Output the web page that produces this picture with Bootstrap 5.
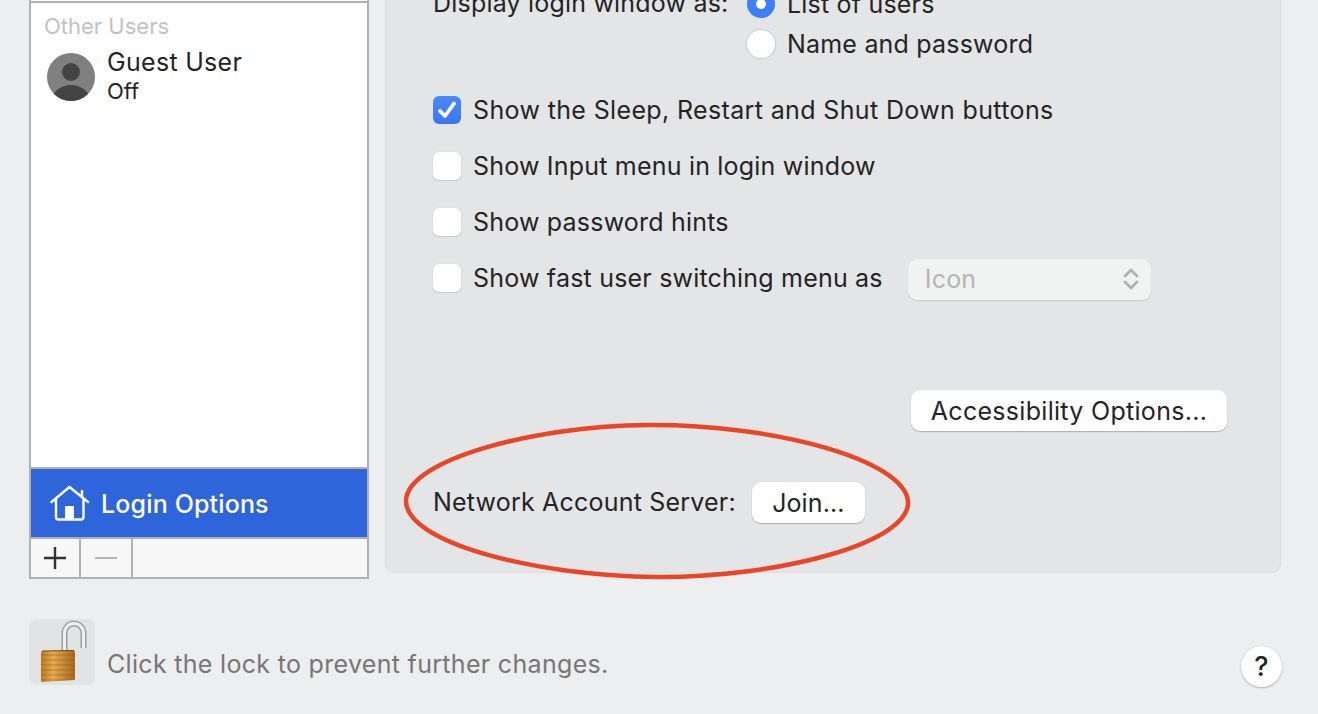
<!DOCTYPE html>
<html lang="en">
<head>
	<meta charset="UTF-8" />
	<title>Users &amp; Groups</title>
	<link href="https://cdn.jsdelivr.net/npm/bootstrap@5.3.3/dist/css/bootstrap.min.css" rel="stylesheet" />
	<style>
		html, body { height: 714px; overflow: hidden; }
		body { background: #edeef0; color: #242424; font-family: Inter, "Liberation Sans", sans-serif; font-size: 25px; line-height: 30px; letter-spacing: .2px; }
		.main-area { margin-top: -40px; padding: 0 37px 0 29px; height: 619px; gap: 16px; }
		.user-side { width: 340px; height: 619px; border: 2px solid #b1b1b1; border-top: 0; background: #fff; }
		.side-top { height: 43px; border-bottom: 2px solid #b1b1b1; }
		.side-body { padding: 9px 0 0 13px; }
		.side-head { color: #c2c2c2; font-size: 22px; line-height: 28px; letter-spacing: 0; }
		.guest-row { margin: 4px 0 0 3px; gap: 12px; }
		.guest-pic { margin-top: 9px; }
		.guest-name { line-height: 32px; margin-top: 2px; letter-spacing: .3px; }
		.guest-off { font-size: 22px; line-height: 27px; letter-spacing: 0; }
		.login-row { height: 72px; background: #2f65da; color: #fff; border-top: 2px solid #b1b1b1; border-bottom: 2px solid #b1b1b1; padding-left: 19px; gap: 11px; font-weight: 500; letter-spacing: .15px; }
		.login-label { margin-top: 2px; }
		.side-tools { height: 38px; background: #f7f7f7; }
		.tool-btn { height: 38px; border-right: 2px solid #b1b1b1; }
		.tool-plus { width: 50px; }
		.tool-minus { width: 52px; }
		.pref-panel { width: 896px; height: 613px; background: #e4e5e7; border: 1px solid #dcdddf; border-radius: 9px; padding: 24px 47px 0; }
		.login-as { gap: 11px; height: 78px; margin-bottom: 19px; }
		.as-label { width: 303px; margin-top: 3px; }
		.radio-line { height: 38px; gap: 12px; margin-bottom: 2px; }
		.radio-dot { width: 28px; height: 28px; border-radius: 50%; background: #fff; box-shadow: 0 0 1px 1px #c9c9c9; }
		.radio-on { background: #3f7ef6; box-shadow: none; }
		.radio-on::after { content: ""; width: 10px; height: 10px; border-radius: 50%; background: #fff; }
		.check-line { height: 56px; gap: 12px; }
		.sleep-text { letter-spacing: .36px; }
		.tick-box { width: 28px; height: 28px; border-radius: 6px; background: #fff; box-shadow: 0 0 1px #b5b5b5, 0 1px 1px #c9c9c9; flex: none; }
		.tick-on { background: linear-gradient(#4b88f8, #3a76f3); box-shadow: none; }
		.icon-select { width: 243px; height: 41px; margin-left: 13px; margin-top: 2px; padding: 0 12px 0 17px; background: #f1f2f2; border-radius: 9px; color: #b5b5b5; box-shadow: 0 1px 1px #c9c9c9; }
		.mac-btn { background: #fff; border-radius: 9px; color: #242424; box-shadow: 0 0 1px #b9b9b9, 0 1px 1px #b0b0b0; height: 41px; font-size: 25px; line-height: 38px; letter-spacing: .3px; }
		.access-btn { width: 316px; margin: 84px 6px 0 0; }
		.join-row { margin-top: 51px; gap: 16px; }
		.join-text { margin-top: -2px; }
		.join-btn { width: 113px; letter-spacing: .1px; }
		.red-ring { position: absolute; left: 17px; top: 461px; width: 510px; height: 158px; }
		.foot-area { height: 95px; padding: 40px 36px 0 29px; }
		.lock-tile { width: 66px; height: 66px; background: #e2e3e5; border-radius: 7px; margin-right: 12px; }
		.lock-note { color: #767676; margin-top: 30px; letter-spacing: .31px; }
		.help-btn { width: 41px; height: 41px; border-radius: 50%; background: #fff; margin-top: 27px; box-shadow: 0 0 1px #b9b9b9, 0 1px 2px #b0b0b0; font-weight: 500; font-size: 27px; }
	</style>
</head>
<body>
	<div class="main-area d-flex align-items-start">
		<div class="user-side d-flex flex-column flex-shrink-0">
			<div class="side-top"></div>
			<div class="side-body flex-grow-1">
				<div class="side-head">Other Users</div>
				<div class="guest-row d-flex align-items-start">
					<svg class="guest-pic" width="48" height="48" viewBox="0 0 48 48">
						<defs><clipPath id="avatarClip"><circle cx="24" cy="24" r="24" /></clipPath></defs>
						<circle cx="24" cy="24" r="24" fill="#808080" />
						<circle cx="24" cy="19" r="9" fill="#444" />
						<ellipse cx="24" cy="47" rx="19" ry="15" fill="#444" clip-path="url(#avatarClip)" />
					</svg>
					<div>
						<div class="guest-name">Guest User</div>
						<div class="guest-off">Off</div>
					</div>
				</div>
			</div>
			<div class="login-row d-flex align-items-center">
				<svg width="40" height="36" viewBox="0 0 40 36" fill="none" stroke="#fff" stroke-width="2.4" stroke-linecap="round" stroke-linejoin="round">
					<path d="M1.5 17 19.5 2 38 17" />
					<path d="M32 12V6" />
					<path d="M6 14V32a2.500 2.500 0 0 0 2.500 2.500H31a2.500 2.500 0 0 0 2.500-2.500V14" />
					<rect x="15" y="21" width="9" height="13.500" fill="#fff" stroke="none" />
				</svg>
				<span class="login-label">Login Options</span>
			</div>
			<div class="side-tools d-flex">
				<div class="tool-btn tool-plus d-flex align-items-center justify-content-center">
					<svg width="22" height="22" viewBox="0 0 22 22" stroke="#333" stroke-width="2.400"><path d="M0 11H22M11 0V22" /></svg>
				</div>
				<div class="tool-btn tool-minus d-flex align-items-center justify-content-center">
					<svg width="22" height="22" viewBox="0 0 22 22" stroke="#b4b4b4" stroke-width="2"><path d="M0 11H22" /></svg>
				</div>
			</div>
		</div>

		<div class="pref-panel position-relative flex-shrink-0">
			<div class="login-as d-flex">
				<div class="as-label">Display login window as:</div>
				<div>
					<div class="radio-line d-flex align-items-center">
						<span class="radio-dot radio-on d-flex align-items-center justify-content-center"></span>
						<span>List of users</span>
					</div>
					<div class="radio-line d-flex align-items-center">
						<span class="radio-dot"></span>
						<span>Name and password</span>
					</div>
				</div>
			</div>
			<div class="check-line d-flex align-items-center">
				<span class="tick-box tick-on d-flex align-items-center justify-content-center">
					<svg width="20" height="18" viewBox="0 0 20 18" fill="none" stroke="#fff" stroke-width="3.800" stroke-linecap="round" stroke-linejoin="round"><path d="M3 10 8 15 17 2.500" /></svg>
				</span>
				<span class="sleep-text">Show the Sleep, Restart and Shut Down buttons</span>
			</div>
			<div class="check-line d-flex align-items-center">
				<span class="tick-box"></span>
				<span>Show Input menu in login window</span>
			</div>
			<div class="check-line d-flex align-items-center">
				<span class="tick-box"></span>
				<span>Show password hints</span>
			</div>
			<div class="check-line d-flex align-items-center">
				<span class="tick-box"></span>
				<span>Show fast user switching menu as</span>
				<div class="icon-select d-flex align-items-center justify-content-between">
					<span>Icon</span>
					<svg width="16" height="24" viewBox="0 0 16 24" fill="none" stroke="#b0b0b0" stroke-width="2.800" stroke-linecap="round" stroke-linejoin="round"><path d="M2 9 8 3 14 9M2 15 8 21 14 15" /></svg>
				</div>
			</div>
			<div class="d-flex justify-content-end">
				<button type="button" class="btn mac-btn access-btn p-0 border-0">Accessibility Options...</button>
			</div>
			<div class="join-row d-flex align-items-center">
				<span class="join-text">Network Account Server:</span>
				<button type="button" class="btn mac-btn join-btn p-0 border-0">Join...</button>
			</div>
			<svg class="red-ring" viewBox="0 0 510 158" fill="none" stroke="#e94526" stroke-width="4.500">
				<path d="M3 78C5 38 130 4 245 3 370 2 503 38 505 80 507 120 380 155 255 155 130 154 1 120 3 78Z" />
			</svg>
		</div>
	</div>

	<div class="foot-area d-flex align-items-start">
		<div class="lock-tile flex-shrink-0">
			<svg width="66" height="66" viewBox="0 0 66 66">
				<defs>
					<linearGradient id="lockGrad" x1="0" x2="1" y1="0" y2="0">
						<stop offset="0" stop-color="#b97b27" />
						<stop offset=".35" stop-color="#e6aa50" />
						<stop offset="1" stop-color="#a8681c" />
					</linearGradient>
					<pattern id="lockBands" width="4" height="5" patternUnits="userSpaceOnUse">
						<rect width="4" height="2" fill="#8a5414" opacity=".25" />
					</pattern>
				</defs>
				<path d="M35.500 33V14a9.500 9.500 0 0 1 19 0V29" fill="none" stroke="#9ba0a3" stroke-width="6" />
				<path d="M35.500 33V14a9.500 9.500 0 0 1 19 0V29" fill="none" stroke="#eef0f1" stroke-width="3" />
				<path d="M12 33.500Q12 32 13.500 32L44.500 31.500Q46 31.500 46 33V60Q46 61 45 61L14 63Q12 63 12 61.500Z" fill="url(#lockGrad)" />
				<path d="M12 33.500Q12 32 13.500 32L44.500 31.500Q46 31.500 46 33V60Q46 61 45 61L14 63Q12 63 12 61.500Z" fill="url(#lockBands)" />
				<path d="M13 32 45 31.500" stroke="#6d4a18" stroke-width="1" />
			</svg>
		</div>
		<div class="lock-note flex-grow-1">Click the lock to prevent further changes.</div>
		<div class="help-btn d-flex align-items-center justify-content-center">?</div>
	</div>
	<script src="https://cdn.jsdelivr.net/npm/bootstrap@5.3.3/dist/js/bootstrap.bundle.min.js"></script>
</body>
</html>
